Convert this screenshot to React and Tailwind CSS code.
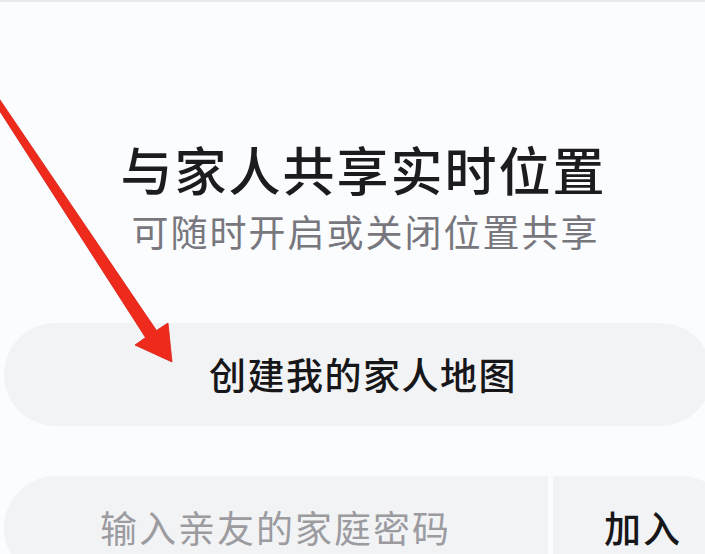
export default function App() {
  return (
    <div
      className="relative w-[705px] h-[554px] overflow-hidden bg-[#fbfcfd] border-t-2 border-[#e9eaec]"
      style={{ fontFamily: '"Noto Sans CJK SC", "Noto Sans", sans-serif' }}
    >
      <div className="flex flex-col items-center pt-[141px]">
        <h1 className="text-[52px] leading-none font-medium tracking-[2px] text-[#1c1c1e] pl-[22px]">
          与家人共享实时位置
        </h1>
        <p className="mt-[18px] text-[37px] leading-none tracking-[2px] text-[#77777d] pl-[26px]">
          可随时开启或关闭位置共享
        </p>
      </div>

      <div className="mt-[73px] flex pl-[4px]">
        <button className="w-[708px] h-[103px] shrink-0 rounded-full bg-[#f2f3f5] flex items-center justify-center text-[37px] font-medium tracking-[1.5px] text-[#17171a]">
          <span className="pl-[10px]">创建我的家人地图</span>
        </button>
      </div>

      <div className="mt-[50px] flex gap-[5px] pl-[4px]">
        <div className="w-[544px] h-[104px] shrink-0 rounded-l-[52px] bg-[#f2f3f5] flex items-center pl-[96px] text-[37px] tracking-[2px] text-[#9b9ba0]">
          输入亲友的家庭密码
        </div>
        <button className="w-[180px] h-[104px] shrink-0 rounded-r-[52px] bg-[#f2f3f5] flex items-center pl-[51px] text-[37px] font-medium tracking-[2px] text-[#17171a]">
          加入
        </button>
      </div>

      {/* red pointer arrow over the create button */}
      <svg className="absolute left-0 top-0 pointer-events-none" width="705" height="554" viewBox="0 0 705 554">
        <polygon
          points="-3,93.5 156.5,328.5 168,321 172,360 135,343 145.5,335.5 -8,97"
          fill="#ee2a1d"
          stroke="#d81f14"
          strokeWidth="0.8"
          strokeLinejoin="round"
        />
      </svg>
    </div>
  );
}
